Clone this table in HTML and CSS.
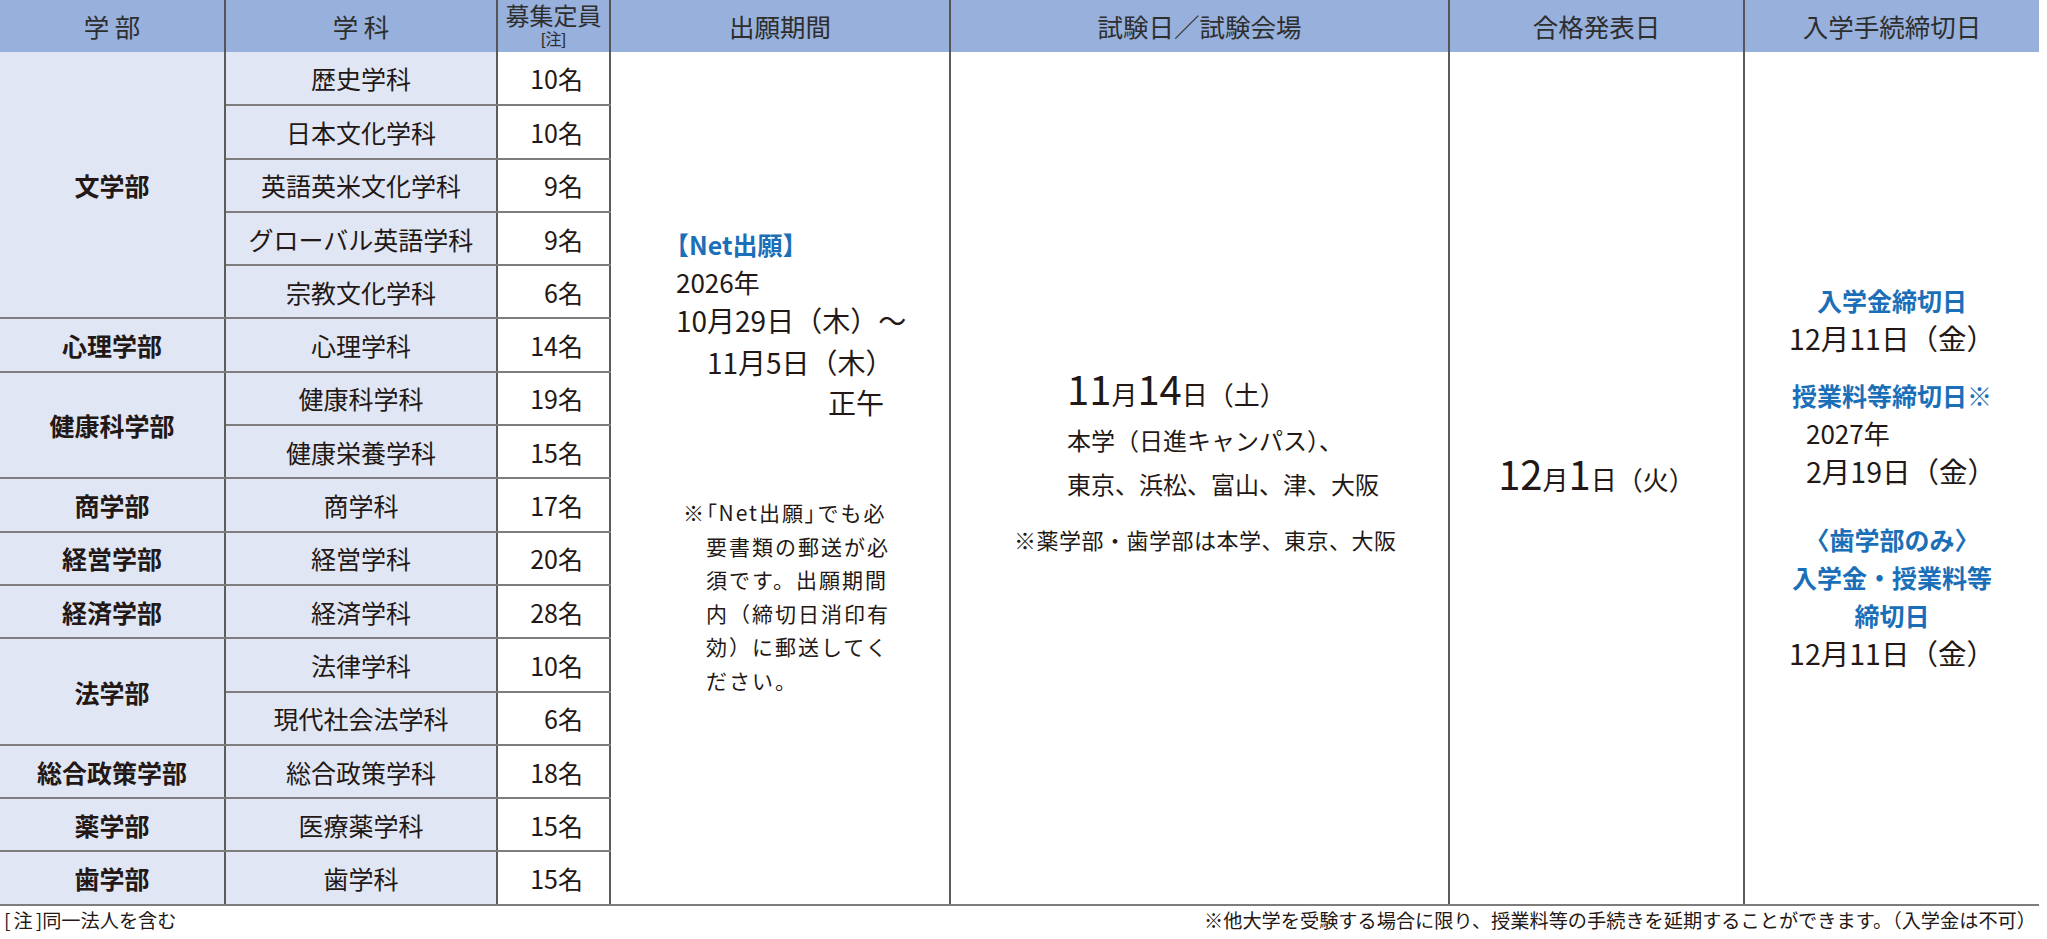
FILE: index.html
```html
<!DOCTYPE html>
<html lang="ja">
<head>
<meta charset="utf-8">
<title>入試日程</title>
<link rel="stylesheet" href="styles.css">
</head>
<body>
<table class="schedule">
  <colgroup>
    <col class="c-fac"><col class="c-dept"><col class="c-cap"><col class="c-apply"><col class="c-exam"><col class="c-result"><col class="c-proc">
  </colgroup>
  <thead>
    <tr class="head">
      <th>学 部</th>
      <th>学 科</th>
      <th class="cap-head"><span class="cap-main">募集定員</span><span class="cap-note">[注]</span></th>
      <th>出願期間</th>
      <th>試験日／試験会場</th>
      <th>合格発表日</th>
      <th class="last">入学手続締切日</th>
    </tr>
  </thead>
  <tbody>
    <tr>
      <td class="fac" rowspan="5">文学部</td>
      <td class="dept">歴史学科</td>
      <td class="cap">10名</td>
      <td class="apply" rowspan="16">
        <div class="net">【Net出願】</div>
        <div class="year">2026年</div>
        <div class="pdate">10月29日（木）〜</div>
        <div class="pdate d2">11月5日（木）</div>
        <div class="pdate d3">正午</div>
        <p class="memo">※<span class="pb">「</span>Net出願<span class="pb">」</span>でも必<br>要書類の郵送が必<br>須です。出願期間<br>内（締切日消印有<br>効）に郵送してく<br>ださい。</p>
      </td>
      <td class="exam" rowspan="16">
        <div class="exam-date"><span class="big">11</span>月<span class="big">14</span>日（土）</div>
        <div class="venue">本学（日進キャンパス）、</div>
        <div class="venue">東京、浜松、富山、津、大阪</div>
        <div class="exam-note">※薬学部・歯学部は本学、東京、大阪</div>
      </td>
      <td class="result" rowspan="16">
        <div class="result-date"><span class="big">12</span>月<span class="big">1</span>日（火）</div>
      </td>
      <td class="proc" rowspan="16">
        <div class="blue">入学金締切日</div>
        <div class="ddate">12月11日（金）</div>
        <div class="blue gap1">授業料等締切日※</div>
        <div class="year left">2027年</div>
        <div class="ddate left">2月19日（金）</div>
        <div class="blue gap2">〈歯学部のみ〉</div>
        <div class="blue">入学金・授業料等</div>
        <div class="blue">締切日</div>
        <div class="ddate">12月11日（金）</div>
      </td>
    </tr>
    <tr><td class="dept">日本文化学科</td><td class="cap">10名</td></tr>
    <tr><td class="dept">英語英米文化学科</td><td class="cap">9名</td></tr>
    <tr><td class="dept">グローバル英語学科</td><td class="cap">9名</td></tr>
    <tr><td class="dept">宗教文化学科</td><td class="cap">6名</td></tr>
    <tr><td class="fac">心理学部</td><td class="dept">心理学科</td><td class="cap">14名</td></tr>
    <tr><td class="fac" rowspan="2">健康科学部</td><td class="dept">健康科学科</td><td class="cap">19名</td></tr>
    <tr><td class="dept">健康栄養学科</td><td class="cap">15名</td></tr>
    <tr><td class="fac">商学部</td><td class="dept">商学科</td><td class="cap">17名</td></tr>
    <tr><td class="fac">経営学部</td><td class="dept">経営学科</td><td class="cap">20名</td></tr>
    <tr><td class="fac">経済学部</td><td class="dept">経済学科</td><td class="cap">28名</td></tr>
    <tr><td class="fac" rowspan="2">法学部</td><td class="dept">法律学科</td><td class="cap">10名</td></tr>
    <tr><td class="dept">現代社会法学科</td><td class="cap">6名</td></tr>
    <tr><td class="fac">総合政策学部</td><td class="dept">総合政策学科</td><td class="cap">18名</td></tr>
    <tr><td class="fac">薬学部</td><td class="dept">医療薬学科</td><td class="cap">15名</td></tr>
    <tr><td class="fac">歯学部</td><td class="dept">歯学科</td><td class="cap">15名</td></tr>
  </tbody>
</table>
<div class="notes">
  <span class="note-left"><span class="br">[注</span>]同一法人を含む</span>
  <span class="note-right">※他大学を受験する場合に限り、授業料等の手続きを延期することができます。（入学金は不可）</span>
</div>
</body>
</html>
```

FILE: styles.css
```css
* {
  box-sizing: border-box;
}

html,
body {
  margin: 0;
  padding: 0;
  background: #ffffff;
}

body {
  width: 2047px;
  font-family: "Noto Sans CJK JP", "Noto Sans", sans-serif;
  color: #231815;
}

.schedule {
  width: 2039px;
  border-collapse: collapse;
  table-layout: fixed;
}

.c-fac { width: 225px; }
.c-dept { width: 272px; }
.c-cap { width: 113px; }
.c-apply { width: 340px; }
.c-exam { width: 499px; }
.c-result { width: 295px; }
.c-proc { width: 295px; }

.head {
  height: 52px;
  background: #97b0dc;
}

.head th {
  padding: 0;
  font-weight: 400;
  font-size: 25.5px;
  line-height: 1.2;
  color: #2e2e2e;
  text-align: center;
  vertical-align: middle;
  border-right: 2px solid #555555;
  white-space: nowrap;
}

.head th.last {
  border-right: none;
}

.cap-head span {
  display: block;
  font-family: "Liberation Sans", "Noto Sans CJK JP", sans-serif;
}

.head th .cap-main {
  font-size: 24px;
  line-height: 24px;
}

.head th .cap-note {
  margin-top: 2px;
  font-size: 16px;
  line-height: 17px;
}

tbody tr {
  height: 53.3px;
}

tbody td {
  padding: 0;
  font-size: 25px;
  line-height: 1.2;
  border-bottom: 2px solid #7d7d7d;
  border-right: 2px solid #5c5c5c;
  white-space: nowrap;
}

.fac {
  background: #e0e6f4;
  font-weight: 700;
  text-align: center;
  vertical-align: middle;
}

.dept {
  background: #e0e6f4;
  text-align: center;
  vertical-align: middle;
}

.cap {
  text-align: right;
  vertical-align: middle;
  padding-right: 26px;
}

/* 出願期間 */
.apply {
  vertical-align: top;
  padding: 174px 0 0 65px;
}

.net {
  margin-left: -12px;
  font-size: 25px;
  font-weight: 700;
  line-height: 37px;
  color: #1b6fb8;
}

.year {
  font-size: 26px;
  line-height: 37px;
}

.pdate {
  font-size: 28px;
  line-height: 40px;
}

.pdate.d2 {
  margin-top: 2px;
  margin-left: 31px;
}

.pdate.d3 {
  margin-left: 152px;
}

.memo {
  margin: 74px 0 0 7px;
  padding-left: 23px;
  text-indent: -23px;
  font-size: 21px;
  letter-spacing: 2px;
  line-height: 33.6px;
}

.pb {
  font-feature-settings: "palt";
}

/* 試験日 */
.exam {
  vertical-align: top;
  padding: 316px 0 0 116px;
}

.exam-date,
.result-date {
  font-size: 26px;
  line-height: 48px;
}

.big {
  font-size: 40px;
  line-height: 1;
}

.venue {
  font-size: 24px;
  line-height: 44px;
}

.exam-note {
  margin: 11px 0 0 -53px;
  font-size: 22px;
  letter-spacing: 0.5px;
  line-height: 44px;
}

/* 合格発表日 */
.result {
  vertical-align: middle;
  text-align: center;
}

/* 入学手続締切日 */
.proc {
  vertical-align: top;
  text-align: center;
  padding-top: 229px;
  border-right: none;
}

.blue {
  font-size: 25px;
  font-weight: 700;
  line-height: 38px;
  color: #1b6fb8;
}

.ddate {
  font-size: 28.5px;
  line-height: 38px;
}

.proc .year {
  line-height: 38px;
}

.left {
  text-align: left;
  padding-left: 61px;
}

.gap1 {
  margin-top: 19px;
}

.gap2 {
  margin-top: 30px;
}

/* 注記 */
.notes {
  display: flex;
  justify-content: space-between;
  width: 2039px;
  padding: 0 3px 0 4px;
  font-size: 19.2px;
  line-height: 28px;
}

.br {
  letter-spacing: 3px;
}
```
